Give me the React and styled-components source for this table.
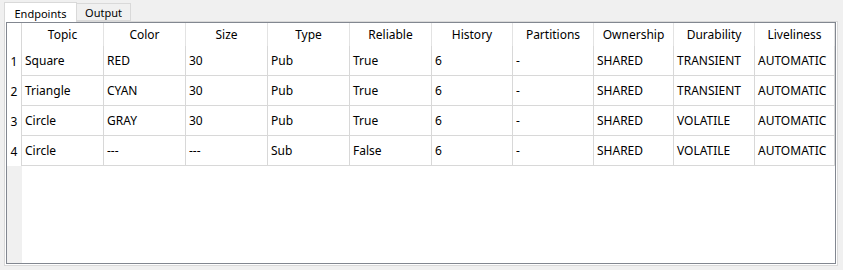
import React from 'react';
import styled, { createGlobalStyle } from 'styled-components';

const GlobalStyle = createGlobalStyle`
  html, body {
    margin: 0;
    padding: 0;
    background: #f0f0f0;
  }
  body {
    font-family: "Segoe UI", "Noto Sans", "Open Sans", sans-serif;
    font-size: 12px;
    color: #000;
  }
`;

const Window = styled.div`
  width: 843px;
  height: 270px;
  box-sizing: border-box;
  padding: 2px 5px 4px 4px;
  display: flex;
  flex-direction: column;
`;

const TabBar = styled.div`
  display: flex;
  align-items: flex-end;
  height: 19px;
  position: relative;
  z-index: 1;
`;

const Tab = styled.div`
  box-sizing: border-box;
  width: ${(p) => p.$width}px;
  height: ${(p) => (p.$active ? '20px' : '18px')};
  margin-bottom: ${(p) => (p.$active ? '-1px' : '0')};
  margin-left: -1px;
  padding-top: ${(p) => (p.$active ? '1px' : '1px')};
  border: 1px solid #d9d9d9;
  border-bottom: ${(p) => (p.$active ? 'none' : '1px solid #d9d9d9')};
  background: ${(p) => (p.$active ? '#ffffff' : '#f0f0f0')};
  font-size: 11px;
  display: flex;
  align-items: center;
  justify-content: center;
  white-space: nowrap;
  &:first-child {
    margin-left: 0;
  }
`;

const Pane = styled.div`
  flex: 1;
  display: flex;
  border: 1px solid #d9d9d9;
  background: #ffffff;
  padding: 0 1px 1px 1px;
`;

const Table = styled.div`
  flex: 1;
  display: flex;
  flex-direction: column;
  border: 1px solid #828790;
  background: #ffffff;
`;

const Row = styled.div`
  display: grid;
  grid-template-columns: 15px 82px 82px 82px 82px 82px 81px 81px 80px 81px 1fr;
  height: ${(p) => (p.$header ? '23px' : '30px')};
`;

const HeaderCell = styled.div`
  border-right: 1px solid #e3e3e3;
  display: flex;
  align-items: center;
  justify-content: center;
  white-space: nowrap;
  overflow: hidden;
`;

const RowNumber = styled.div`
  border-right: 1px solid #d8d8d8;
  display: flex;
  align-items: center;
  justify-content: center;
  background: #ffffff;
`;

const Cell = styled.div`
  border-right: 1px solid #d8d8d8;
  border-bottom: 1px solid #d8d8d8;
  display: flex;
  align-items: center;
  padding-left: 3px;
  white-space: nowrap;
  overflow: hidden;
`;

const Filler = styled.div`
  flex: 1;
  display: flex;
`;

const RowHeaderFill = styled.div`
  width: 15px;
  background: #f0f0f0;
`;

const columns = [
  'Topic',
  'Color',
  'Size',
  'Type',
  'Reliable',
  'History',
  'Partitions',
  'Ownership',
  'Durability',
  'Liveliness',
];

const endpoints = [
  ['Square', 'RED', '30', 'Pub', 'True', '6', '-', 'SHARED', 'TRANSIENT', 'AUTOMATIC'],
  ['Triangle', 'CYAN', '30', 'Pub', 'True', '6', '-', 'SHARED', 'TRANSIENT', 'AUTOMATIC'],
  ['Circle', 'GRAY', '30', 'Pub', 'True', '6', '-', 'SHARED', 'VOLATILE', 'AUTOMATIC'],
  ['Circle', '---', '---', 'Sub', 'False', '6', '-', 'SHARED', 'VOLATILE', 'AUTOMATIC'],
];

export default function App() {
  return (
    <>
      <GlobalStyle />
      <Window>
        <TabBar>
          <Tab $active $width={73}>Endpoints</Tab>
          <Tab $width={55}>Output</Tab>
        </TabBar>
        <Pane>
          <Table>
            <Row $header>
              <RowNumber />
              {columns.map((c) => (
                <HeaderCell key={c}>{c}</HeaderCell>
              ))}
            </Row>
            {endpoints.map((row, i) => (
              <Row key={i}>
                <RowNumber>{i + 1}</RowNumber>
                {row.map((v, j) => (
                  <Cell key={j}>{v}</Cell>
                ))}
              </Row>
            ))}
            <Filler>
              <RowHeaderFill />
            </Filler>
          </Table>
        </Pane>
      </Window>
    </>
  );
}
